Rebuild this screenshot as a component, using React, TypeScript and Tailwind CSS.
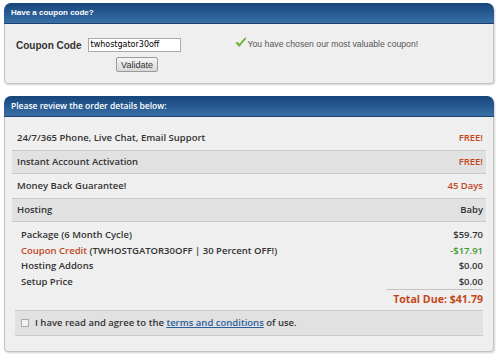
import React from 'react';

interface OrderRow {
  label: string;
  value: string;
  accent: boolean;
}

const rows: OrderRow[] = [
  { label: '24/7/365 Phone, Live Chat, Email Support', value: 'FREE!', accent: true },
  { label: 'Instant Account Activation', value: 'FREE!', accent: true },
  { label: 'Money Back Guarantee!', value: '45 Days', accent: true },
  { label: 'Hosting', value: 'Baby', accent: false },
];

const Panel: React.FC<{ title: string; titleClass: string; children: React.ReactNode }> = ({
  title,
  titleClass,
  children,
}) => (
  <div className="w-[490px] shadow-[1px_1px_2px_rgba(0,0,0,0.18)] rounded-t-[7px] rounded-b-[4px]">
    <div className="h-[21px] rounded-t-[7px] bg-linear-to-b from-[#15457a] to-[#3a6fa8] pl-[7px] flex items-center border-b border-[#1d4170]">
      <span className={`text-white ${titleClass}`}>{title}</span>
    </div>
    <div className="bg-[#efefef] border border-t-0 border-[#c3c3c3] rounded-b-[4px]">{children}</div>
  </div>
);

const CheckIcon = () => (
  <svg width="12" height="11" viewBox="0 0 12 11">
    <path d="M1 6.2 L4.2 9.6 L11 1.4 L10.2 0.8 L4.3 7.2 L2.2 5 Z" fill="#6cb530" stroke="#5aa126" strokeWidth="0.6" strokeLinejoin="round" />
  </svg>
);

const App: React.FC = () => {
  return (
    <div className="w-[504px] h-[361px] bg-white pt-[3px] pl-[4px] font-['Open_Sans','Liberation_Sans',sans-serif]">
      <Panel title="Have a coupon code?" titleClass="font-bold text-[8px] font-['Liberation_Sans',sans-serif]">
        <div className="h-[59px] flex pt-[14px] pl-[11px]">
          <span className="text-[10px] font-bold text-[#333] font-['Liberation_Sans',sans-serif] leading-[14px] mt-[1px]">
            Coupon Code
          </span>
          <div className="flex flex-col items-center ml-[6px]">
            <div className="w-[93px] h-[14px] bg-white border border-[#aaa] text-[8px] text-black leading-[12px] pl-[2px] font-['DejaVu_Sans',sans-serif]">
              twhostgator30off
            </div>
            <button className="mt-[5px] h-[15px] px-[4px] ml-[6px] rounded-[2px] border border-[#999] bg-linear-to-b from-[#f6f6f6] to-[#d8d8d8] text-[9px] text-[#333] leading-[12px] font-['Liberation_Sans',sans-serif]">
              Validate
            </button>
          </div>
          <div className="flex items-start ml-[54px] -mt-[1px]">
            <CheckIcon />
            <span className="ml-[1px] text-[8.7px] text-[#555] leading-[12px] mt-[1px] font-['Liberation_Sans',sans-serif]">
              You have chosen our most valuable coupon!
            </span>
          </div>
        </div>
      </Panel>

      <div className="h-[12px]" />

      <Panel title="Please review the order details below:" titleClass="font-semibold text-[8.5px]">
        <div className="pt-[9px] pb-[15px] text-[9.5px] font-semibold text-[#333]">
          <div className="mx-[7px]">
            {rows.map((row, i) => (
              <div
                key={row.label}
                className={`h-[24px] flex items-center justify-between pl-[5px] pr-[3px] ${
                  i % 2 === 1 ? 'bg-[#e1e1e1] border-y border-[#c9c9c9]' : ''
                }`}
              >
                <span>{row.label}</span>
                <span className={row.accent ? 'text-[#c4471b]' : 'text-[#333]'}>{row.value}</span>
              </div>
            ))}
          </div>

          <div className="mx-[10px] pt-[5px] pl-[6px] leading-[15.5px]">
            <div className="flex justify-between">
              <span>Package (6 Month Cycle)</span>
              <span>$59.70</span>
            </div>
            <div className="flex justify-between">
              <span>
                <span className="text-[#c4471b]">Coupon Credit</span> (TWHOSTGATOR30OFF | 30 Percent OFF!)
              </span>
              <span className="text-[#3a9a2a]">-$17.91</span>
            </div>
            <div className="flex justify-between">
              <span>Hosting Addons</span>
              <span>$0.00</span>
            </div>
            <div className="flex justify-between">
              <span>Setup Price</span>
              <span>$0.00</span>
            </div>
            <div className="flex justify-end">
              <div className="w-[97px] border-t border-[#c4c4c4] text-right text-[10.6px] font-bold text-[#c4471b] leading-[19px]">
                Total Due: $41.79
              </div>
            </div>
          </div>

          <div className="mx-[10px] mt-[1px] h-[26px] bg-[#e1e1e1] border-y border-[#c9c9c9] flex items-center pl-[6px]">
            <span className="w-[8px] h-[8px] border border-[#aaa] bg-[#f4f4f4]" />
            <span className="ml-[6px]">
              I have read and agree to the{' '}
              <span className="text-[#2b5f9e] underline">terms and conditions</span> of use.
            </span>
          </div>
        </div>
      </Panel>
    </div>
  );
};

export default App;
